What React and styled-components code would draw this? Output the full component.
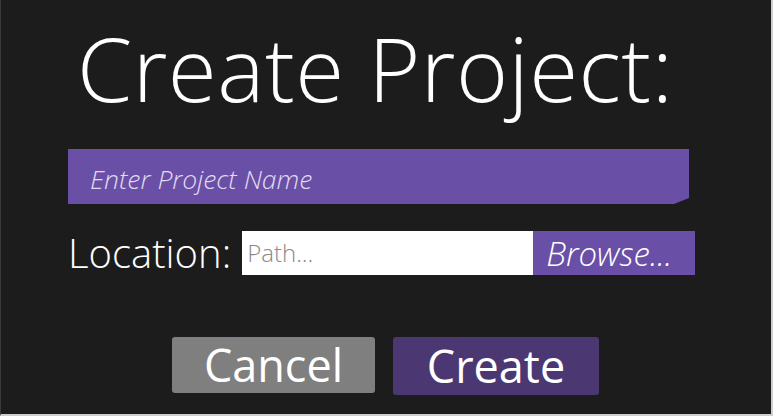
import React from 'react';
import styled, { createGlobalStyle } from 'styled-components';

const GlobalStyle = createGlobalStyle`
  html, body {
    margin: 0;
    padding: 0;
    background: #1c1c1c;
  }
  * { box-sizing: border-box; }
`

const Dialog = styled.div`
  width: 773px;
  height: 416px;
  background: #1c1c1c;
  border-left: 1px solid #3a3a3a;
  border-right: 2px solid #cfcfcf;
  border-bottom: 2px solid #cfcfcf;
  font-family: "Open Sans", "Noto Sans", sans-serif;
  color: #fff;
  display: flex;
  flex-direction: column;
  padding: 24px 0 0 67px;
  overflow: hidden;
`

const Title = styled.h1`
  margin: 0 0 0 9px;
  font-size: 89px;
  font-weight: 300;
  line-height: 88px;
  height: 88px;
  letter-spacing: 0.5px;
`

const NameInput = styled.div`
  margin-top: 37px;
  width: 621px;
  height: 55px;
  background: #6a4fa6;
  clip-path: polygon(0 0, 100% 0, 100% 49px, 606px 100%, 0 100%);
  padding: 6px 0 0 22px;
  font-size: 26.5px;
  font-style: italic;
  font-weight: 300;
  line-height: 49px;
  color: #e2daf2;
`

const Row = styled.div`
  margin-top: 27px;
  display: flex;
  align-items: center;
  height: 44px;
`

const Label = styled.span`
  font-size: 40px;
  font-weight: 300;
  line-height: 44px;
  margin-right: 11px;
`

const PathInput = styled.div`
  width: 291px;
  height: 44px;
  background: #fff;
  color: #8a8a8a;
  font-size: 24px;
  font-weight: 300;
  line-height: 44px;
  padding-left: 5px;
`

const Browse = styled.div`
  width: 162px;
  height: 44px;
  background: #6a4fa6;
  font-size: 33px;
  font-style: italic;
  font-weight: 350;
  line-height: 46px;
  padding-left: 13px;
  white-space: nowrap;
`

const Buttons = styled.div`
  margin: 62px 0 0 104px;
  display: flex;
  gap: 18px;
  align-items: flex-start;
`

const Button = styled.div`
  width: ${p => p.$w}px;
  height: ${p => p.$h}px;
  background: ${p => p.$bg};
  border-radius: 3px;
  font-size: 45px;
  line-height: ${p => p.$h}px;
  text-align: center;
  color: #fff;
`

export default function App() {
  return (
    <>
      <GlobalStyle />
      <Dialog>
        <Title>Create Project:</Title>
        <NameInput>Enter Project Name</NameInput>
        <Row>
          <Label>Location:</Label>
          <PathInput>Path...</PathInput>
          <Browse>Browse...</Browse>
        </Row>
        <Buttons>
          <Button $w={203} $h={56} $bg="#7f7f7f">Cancel</Button>
          <Button $w={206} $h={58} $bg="#4b3873">Create</Button>
        </Buttons>
      </Dialog>
    </>
  );
}
